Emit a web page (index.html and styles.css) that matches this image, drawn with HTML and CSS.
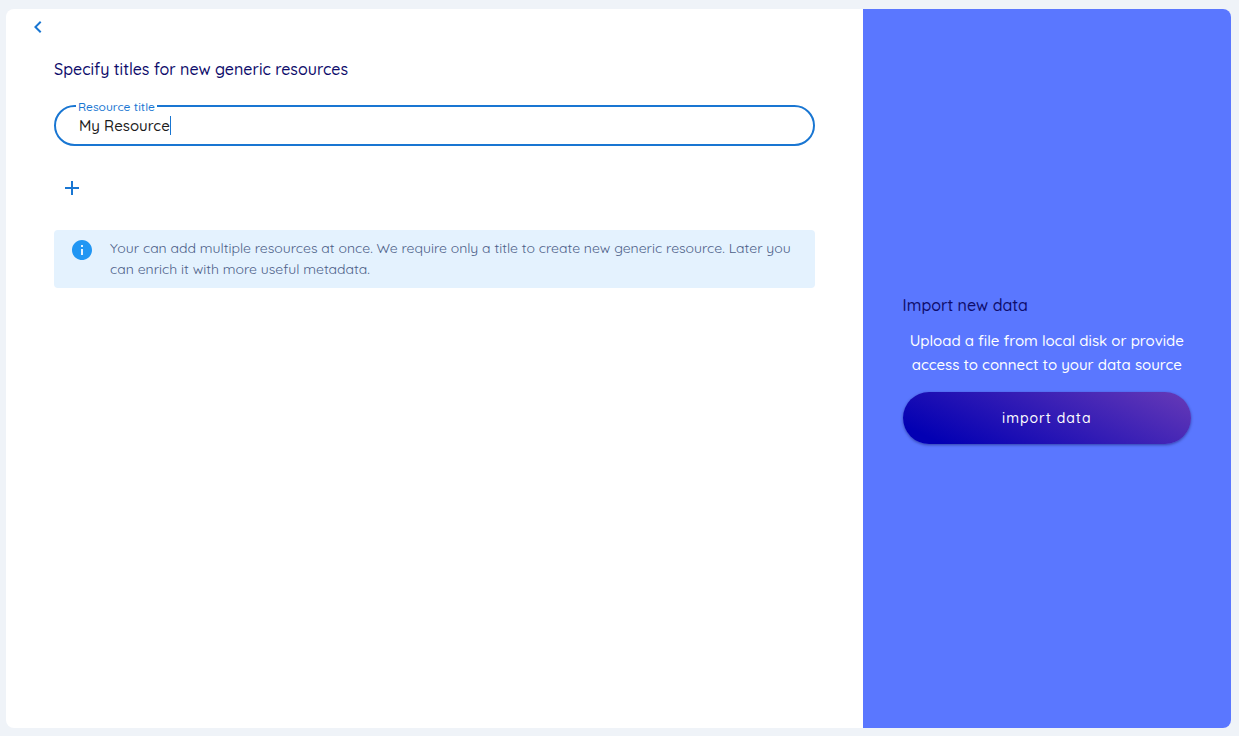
FILE: index.html
```html
<!DOCTYPE html>
<html lang="en">
<head>
<meta charset="utf-8">
<meta name="viewport" content="width=device-width, initial-scale=1">
<title>New generic resources</title>
<link rel="stylesheet" href="styles.css">
</head>
<body>
<div class="card">
  <main class="editor">
    <button class="icon-button back" type="button" aria-label="Back">
      <svg viewBox="0 0 24 24" width="24" height="24" aria-hidden="true"><path d="M15.41 7.41 14 6l-6 6 6 6 1.41-1.41L10.83 12z"/></svg>
    </button>
    <form class="form">
      <h1 class="heading">Specify titles for new generic resources</h1>
      <div class="field">
        <label class="field-label" for="resource-title">Resource title</label>
        <input class="field-input" id="resource-title" type="text" value="My Resource">
        <span class="caret"></span>
      </div>
      <button class="icon-button add" type="button" aria-label="Add resource">
        <svg viewBox="0 0 24 24" width="24" height="24" aria-hidden="true"><path d="M19 13h-6v6h-2v-6H5v-2h6V5h2v6h6z"/></svg>
      </button>
      <div class="notice">
        <svg class="notice-icon" viewBox="0 0 24 24" width="24" height="24" aria-hidden="true"><path d="M12 2C6.48 2 2 6.48 2 12s4.48 10 10 10 10-4.480 10-10S17.520 2 12 2zm1 15h-2v-6h2v6zm0-8h-2V7h2v2z"/></svg>
        <p class="notice-text">Your can add multiple resources at once. We require only a title to create new generic resource. Later you can enrich it with more useful metadata.</p>
      </div>
    </form>
  </main>
  <aside class="import">
    <h2 class="heading">Import new data</h2>
    <p class="import-text">Upload a file from local disk or provide access to connect to your data source</p>
    <button class="import-button" type="button">import data</button>
  </aside>
</div>
</body>
</html>
```
FILE: styles.css
```css
* {
  box-sizing: border-box;
}

body {
  display: flex;
  min-height: 100vh;
  margin: 0;
  padding: 9px 8px 8px 6px;
  background: #eff3f8;
  font-family: Quicksand, Inter, "Noto Sans", sans-serif;
  font-weight: 500;
}

.card {
  display: grid;
  grid-template-columns: 93fr 40fr;
  flex: 1;
  overflow: hidden;
  border-radius: 8px;
  background: #fff;
}

.editor {
  padding: 0 48px;
}

.icon-button {
  display: flex;
  align-items: center;
  justify-content: center;
  width: 36px;
  height: 36px;
  padding: 0;
  border: 0;
  border-radius: 50%;
  background: none;
  color: #1976d2;
  cursor: pointer;
}

.icon-button svg,
.notice-icon {
  fill: currentColor;
}

.back {
  margin-left: -34px;
}

.form {
  padding-top: 12px;
}

.heading {
  margin: 0;
  color: #0e0c6b;
  font-size: 16px;
  font-weight: 500;
  line-height: 24px;
}

.field {
  position: relative;
  display: flex;
  align-items: center;
  height: 41px;
  margin: 24px 0;
  padding: 0 23px;
  border: 2px solid #1976d2;
  border-radius: 21px;
}

.field-label {
  position: absolute;
  top: -7px;
  left: 20px;
  padding: 0 2px;
  background: #fff;
  color: #1976d2;
  font-size: 12px;
  line-height: 14px;
}

.field-input {
  field-sizing: content;
  min-width: 1px;
  height: 24px;
  padding: 0;
  border: 0;
  outline: 0;
  background: none;
  color: #1c1c1c;
  font-family: inherit;
  font-size: 15px;
  font-weight: 500;
}

.caret {
  width: 1px;
  height: 19px;
  background: #1976d2;
}

.notice {
  display: flex;
  gap: 16px;
  margin-top: 24px;
  padding: 8px 16px;
  border-radius: 4px;
  background: #e4f2fe;
  color: #4c6088;
}

.notice-icon {
  flex: none;
  color: #2196f3;
}

.notice-text {
  margin: 0;
  font-size: 14px;
  font-weight: 400;
  line-height: 21px;
}

.import {
  display: flex;
  flex-direction: column;
  justify-content: center;
  padding: 0 40px;
  background: #5a77ff;
}

.import-text {
  margin: 12px 0 15px;
  color: #fff;
  font-size: 15px;
  line-height: 24px;
  text-align: center;
}

.import-button {
  height: 52px;
  border: 0;
  border-radius: 26px;
  background: linear-gradient(25deg, #0300b3 10%, #673ab7 100%);
  box-shadow: 0 1px 3px rgba(0, 0, 60, 0.45);
  color: #fff;
  font-family: inherit;
  font-size: 14px;
  font-weight: 500;
  letter-spacing: 1px;
  cursor: pointer;
}
```
